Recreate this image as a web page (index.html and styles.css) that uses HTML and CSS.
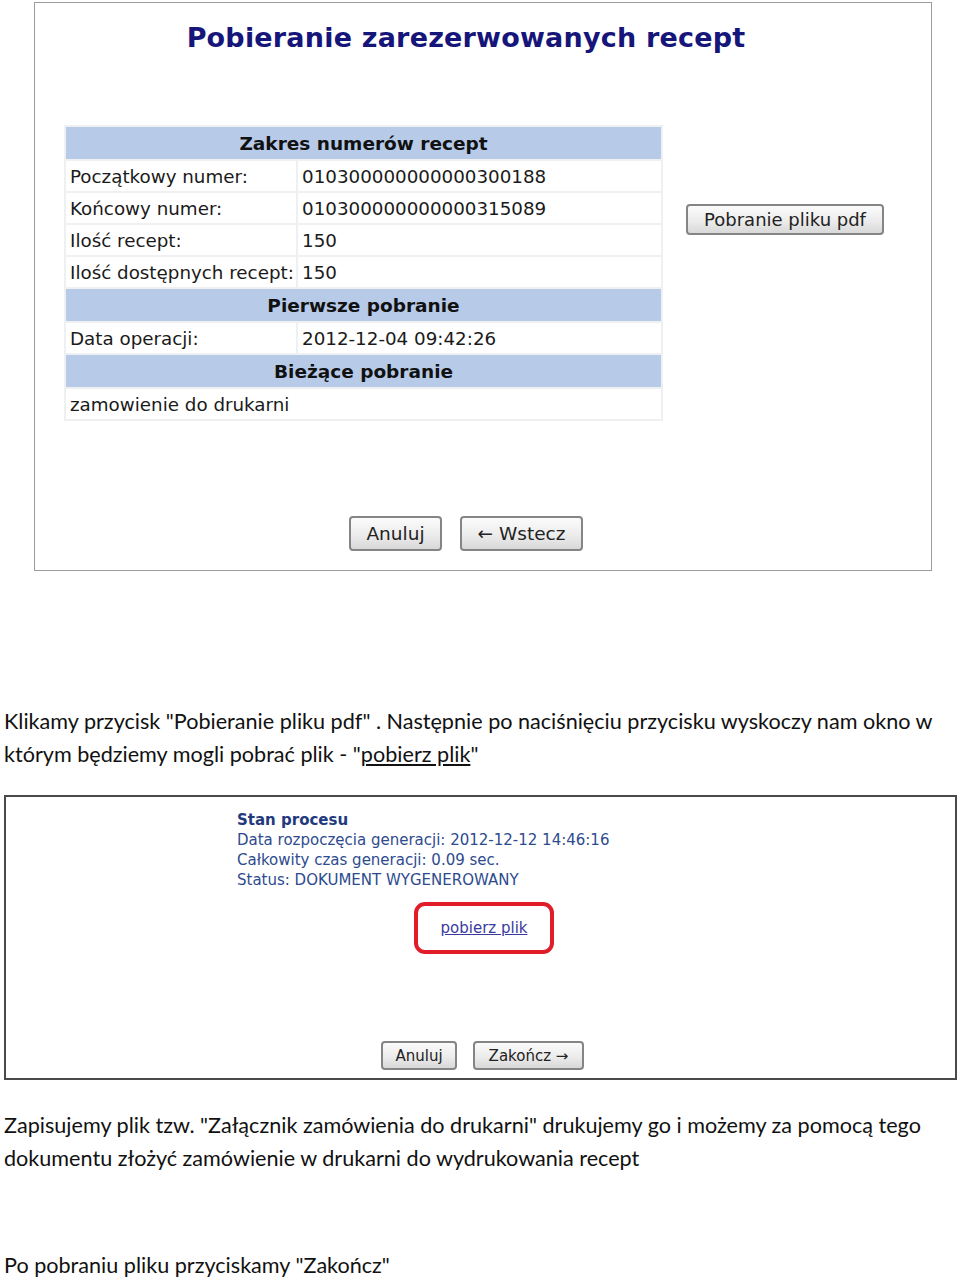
FILE: index.html
```html
<!DOCTYPE html>
<html lang="pl">
<head>
<meta charset="utf-8">
<title>Pobieranie recept</title>
<link rel="stylesheet" href="styles.css">
</head>
<body>
<div class="shot shot1">
  <h1 class="title">Pobieranie zarezerwowanych recept</h1>
  <div class="content-row">
    <table class="range">
      <tr><th colspan="2">Zakres numerów recept</th></tr>
      <tr><td class="lbl">Początkowy numer:</td><td>010300000000000300188</td></tr>
      <tr><td class="lbl">Końcowy numer:</td><td>010300000000000315089</td></tr>
      <tr><td class="lbl">Ilość recept:</td><td>150</td></tr>
      <tr><td class="lbl">Ilość dostępnych recept:</td><td>150</td></tr>
      <tr><th colspan="2">Pierwsze pobranie</th></tr>
      <tr><td class="lbl">Data operacji:</td><td>2012-12-04 09:42:26</td></tr>
      <tr><th colspan="2">Bieżące pobranie</th></tr>
      <tr><td colspan="2">zamowienie do drukarni</td></tr>
    </table>
    <button class="btn btn-pdf">Pobranie pliku pdf</button>
  </div>
  <div class="actions1">
    <button class="btn btn-anuluj">Anuluj</button>
    <button class="btn btn-wstecz">← Wstecz</button>
  </div>
</div>

<p class="doc p1">Klikamy przycisk "Pobieranie pliku pdf" . Następnie po naciśnięciu przycisku wyskoczy nam okno w<br>którym będziemy mogli pobrać plik - "<u>pobierz plik</u>"</p>

<div class="shot shot2">
  <div class="status">
    <div class="status-title">Stan procesu</div>
    <div>Data rozpoczęcia generacji: 2012-12-12 14:46:16</div>
    <div>Całkowity czas generacji: 0.09 sec.</div>
    <div>Status: DOKUMENT WYGENEROWANY</div>
  </div>
  <div class="download-box"><a href="#" class="download-link">pobierz plik</a></div>
  <div class="actions2">
    <button class="btn btn-small btn-anuluj2">Anuluj</button>
    <button class="btn btn-small btn-zakoncz">Zakończ →</button>
  </div>
</div>

<p class="doc p2">Zapisujemy plik tzw. "Załącznik zamówienia do drukarni" drukujemy go i możemy za pomocą tego<br>dokumentu złożyć zamówienie w drukarni do wydrukowania recept</p>

<p class="doc p3">Po pobraniu pliku przyciskamy "Zakończ"</p>
</body>
</html>
```

FILE: styles.css
```css
html, body {
  margin: 0;
  padding: 0;
  background: #ffffff;
}

body {
  width: 960px;
  height: 1280px;
  overflow: hidden;
  font-family: "DejaVu Sans", Verdana, sans-serif;
}

.shot {
  box-sizing: border-box;
  background: #fff;
}

.shot1 {
  margin: 2px 0 0 34px;
  width: 898px;
  height: 569px;
  border: 1px solid #9c9c9c;
  padding-top: 19px;
}

.title {
  margin: 0;
  padding-right: 34px;
  text-align: center;
  font-size: 27px;
  line-height: 32px;
  font-weight: bold;
  color: #16167a;
  letter-spacing: 0.2px;
}

.content-row {
  display: flex;
  align-items: flex-start;
  margin-top: 71px;
  padding-left: 29px;
}

.range {
  border-collapse: separate;
  border-spacing: 2px;
  background: #eef0f2;
  font-size: 18.3px;
  color: #1a1a1a;
}

.range th {
  background: #b7cbe9;
  height: 32px;
  padding: 0;
  font-weight: bold;
  font-size: 18.5px;
  color: #111;
  text-align: center;
}

.range td {
  background: #fff;
  height: 30px;
  padding: 0 0 0 4px;
  text-align: left;
  white-space: nowrap;
}

.range td.lbl {
  width: 226px;
}

.range td + td {
  width: 359px;
}

.btn {
  box-sizing: border-box;
  font-family: "DejaVu Sans", Verdana, sans-serif;
  color: #222;
  border: 2px solid #858585;
  border-radius: 4px;
  background: linear-gradient(#fbfbfb, #ececec 55%, #d8d8d8);
  padding: 0;
  cursor: pointer;
}

.btn-pdf {
  width: 198px;
  height: 31px;
  margin: 79px 0 0 23px;
  font-size: 18px;
}

.actions1 {
  display: flex;
  gap: 18px;
  margin-top: 95px;
  padding-left: 314px;
}

.btn-anuluj,
.btn-wstecz {
  height: 35px;
  font-size: 18.5px;
}

.btn-anuluj { width: 93px; }
.btn-wstecz { width: 123px; }

.doc {
  margin: 0;
  padding-left: 4px;
  font-family: "Lato", "Open Sans", sans-serif;
  font-size: 21.6px;
  line-height: 33px;
  color: #111;
  white-space: nowrap;
}

.p1 { margin-top: 134px; }
.p2 { margin-top: 29px; }
.p3 { margin-top: 74px; }

.shot2 {
  margin: 24px 0 0 4px;
  width: 953px;
  height: 285px;
  border: 2px solid #4a4a4a;
  padding-top: 13px;
}

.status {
  padding-left: 231px;
  font-size: 15px;
  line-height: 20px;
  color: #2d4b8e;
}

.status-title {
  font-weight: bold;
  font-size: 15px;
  color: #1f3a7d;
}

.download-box {
  box-sizing: border-box;
  width: 140px;
  height: 52px;
  margin: 12px 0 0 408px;
  border: 4px solid #e11d2a;
  border-radius: 11px;
  display: flex;
  align-items: center;
  justify-content: center;
}

.download-link {
  font-size: 15px;
  color: #3a3a9e;
  text-decoration: underline;
}

.actions2 {
  display: flex;
  gap: 16px;
  margin-top: 87px;
  padding-left: 375px;
}

.btn-small {
  height: 29px;
  font-size: 15px;
}

.btn-anuluj2 { width: 76px; }
.btn-zakoncz { width: 111px; }
```
